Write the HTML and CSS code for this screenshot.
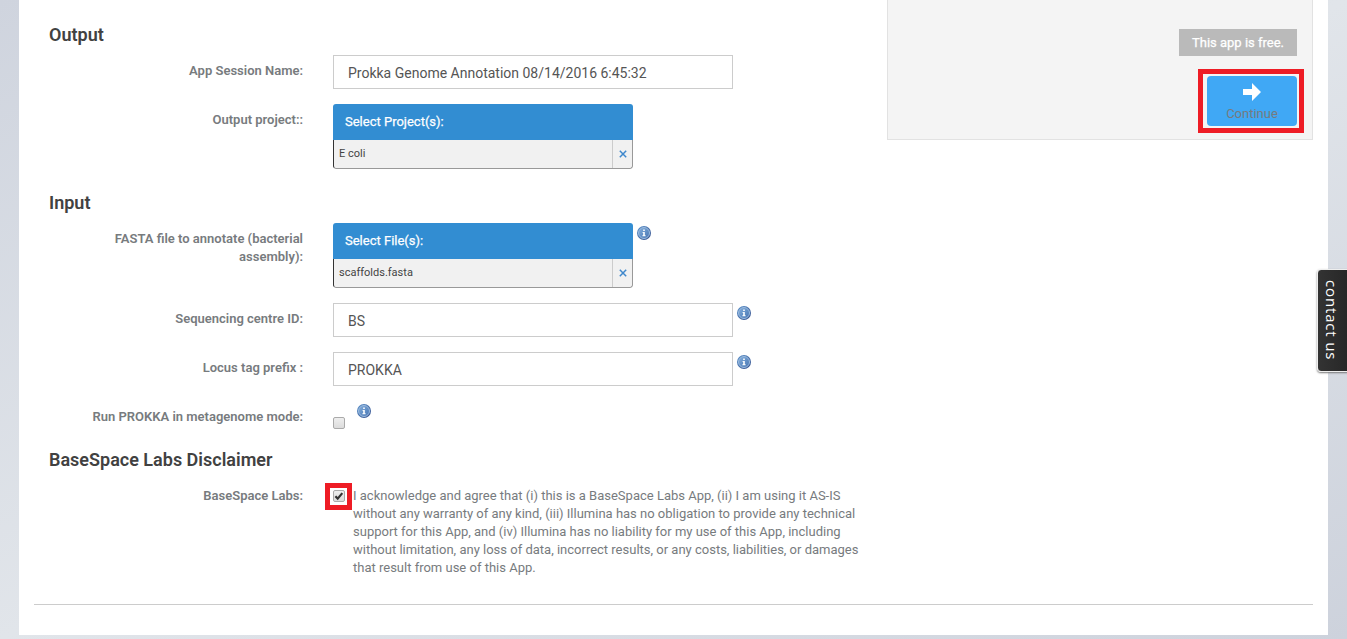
FILE: index.html
```html
<!DOCTYPE html>
<html lang="en">
<head>
<meta charset="utf-8">
<title>Prokka Genome Annotation</title>
<link rel="stylesheet" href="styles.css">
</head>
<body>
<svg class="defs" width="0" height="0" aria-hidden="true">
  <defs>
    <linearGradient id="rim" x1="0" y1="0" x2="1" y2="1"><stop offset="0" stop-color="#5d93cb"/><stop offset="1" stop-color="#344f8c"/></linearGradient>
    <linearGradient id="disc" x1="0" y1="0" x2="1" y2="1"><stop offset="0" stop-color="#84afdc"/><stop offset="1" stop-color="#4775b3"/></linearGradient>
    <symbol id="info" viewBox="0 0 14 14">
      <circle cx="7" cy="7" r="7" fill="url(#rim)"/>
      <circle cx="7" cy="7" r="5.5" fill="url(#disc)" stroke="#a3c1e2" stroke-width=".9"/>
      <path d="M6.2 3.6h1.6v1.3H6.2zM5.5 5.9h2.3v3.3h.8v1H5.4v-1h.8V6.8h-.7z" fill="#fff"/>
    </symbol>
  </defs>
</svg>
<div class="panel">
  <main class="columns">
    <form class="form">
      <h2 class="title">Output</h2>
      <div class="row">
        <label class="label">App Session Name:</label>
        <div class="input"><span>Prokka Genome Annotation 08/14/2016 6:45:32</span></div>
      </div>
      <div class="row">
        <label class="label">Output project::</label>
        <div class="picker">
          <div class="picker-head">Select Project(s):</div>
          <div class="picker-item"><span class="picker-name">E coli</span><span class="remove"><svg width="8" height="8" viewBox="0 0 8 8"><path d="M.8.8l6.4 6.4M7.2.8L.8 7.2"/></svg></span></div>
        </div>
      </div>
      <h2 class="title">Input</h2>
      <div class="row">
        <label class="label">FASTA file to annotate (bacterial assembly):</label>
        <div class="picker">
          <div class="picker-head">Select File(s):</div>
          <div class="picker-item"><span class="picker-name">scaffolds.fasta</span><span class="remove"><svg width="8" height="8" viewBox="0 0 8 8"><path d="M.8.8l6.4 6.4M7.2.8L.8 7.2"/></svg></span></div>
        </div>
        <svg class="info"><use href="#info"/></svg>
      </div>
      <div class="row">
        <label class="label">Sequencing centre ID:</label>
        <div class="input"><span>BS</span></div>
        <svg class="info"><use href="#info"/></svg>
      </div>
      <div class="row">
        <label class="label">Locus tag prefix :</label>
        <div class="input"><span>PROKKA</span></div>
        <svg class="info"><use href="#info"/></svg>
      </div>
      <div class="row row-check">
        <label class="label">Run PROKKA in metagenome mode:</label>
        <span class="check check-low"></span>
        <svg class="info info-far"><use href="#info"/></svg>
      </div>
      <h2 class="title title-last">BaseSpace Labs Disclaimer</h2>
      <div class="row">
        <label class="label">BaseSpace Labs:</label>
        <span class="check-frame"><span class="check"><svg width="12" height="12" viewBox="0 0 12 12"><path d="M2.4 6.3l2.3 2.3 4.6-5.5"/></svg></span></span>
        <p class="terms">I acknowledge and agree that (i) this is a BaseSpace Labs App, (ii) I am using it AS-IS<br>without any warranty of any kind, (iii) Illumina has no obligation to provide any technical<br>support for this App, and (iv) Illumina has no liability for my use of this App, including<br>without limitation, any loss of data, incorrect results, or any costs, liabilities, or damages<br>that result from use of this App.</p>
      </div>
    </form>
    <aside class="summary">
      <span class="price">This app is free.</span>
      <div class="highlight">
        <div class="continue">
          <svg width="18" height="18" viewBox="0 0 18 18"><path d="M0 6h9V0l9 9-9 9v-6H0z" fill="#fff"/></svg>
          <span>Continue</span>
        </div>
      </div>
    </aside>
  </main>
  <hr class="rule">
</div>
<div class="contact"><span>contact us</span></div>
</body>
</html>
```
FILE: styles.css
```css
* { box-sizing: border-box; }
body {
  margin: 0;
  height: 639px;
  overflow: hidden;
  font: 13px/18px Roboto, "Liberation Sans", sans-serif;
  color: #777b7e;
  background: linear-gradient(to bottom right, #cfd4de, #e1e5ea 50%, #cdd2dc);
}
.defs { display: block; height: 0; }
.panel {
  height: 635px;
  margin: 0 19px;
  padding: 0 15px;
  background: #fff;
}
.columns {
  display: flex;
  justify-content: space-between;
  align-items: flex-start;
  height: 604px;
}
.form { width: 840px; padding: 17px 0 0 15px; }
.title {
  height: 38px;
  margin: 0;
  font-size: 18px;
  line-height: 36px;
  font-weight: 600;
  color: #414141;
}
.row { display: flex; align-items: flex-start; margin-bottom: 15px; }
.row + .title { margin-top: 16px; }
.row-check { height: 26px; }
.row-check + .title-last { margin-top: 15px; }
.label {
  width: 254px;
  margin-right: 30px;
  padding: 7px 0 0 30px;
  flex: none;
  text-align: right;
  font-weight: 600;
}
.input {
  width: 400px;
  height: 34px;
  padding: 1px 14px 0;
  border: 1px solid #ccc;
  font-size: 14px;
  line-height: 33px;
  color: #555;
}
.picker { width: 300px; height: 65px; border-radius: 3px; overflow: hidden; }
.picker-head {
  height: 36px;
  padding-left: 12px;
  background: #328dd2;
  color: #fff;
  -webkit-text-stroke: .25px #fff;
  line-height: 35px;
}
.picker-item {
  display: flex;
  height: 29px;
  border: 1px solid #999;
  border-top: 0;
  border-left-color: #333;
  border-radius: 0 0 3px 3px;
  background: #f1f1f1;
  color: #444;
  font-size: 11px;
  line-height: 27px;
}
.picker-name { flex: 1; padding-left: 5px; }
.remove {
  display: flex;
  width: 20px;
  padding-bottom: 1px;
  align-items: center;
  justify-content: center;
  border-left: 1px solid #ccc;
}
.remove path { fill: none; stroke: #3f88cc; stroke-width: 1.5; }
.info { width: 14px; height: 14px; margin: 3px 0 0 4px; }
.info-far { margin-left: 11px; }
.check {
  display: block;
  width: 12px;
  height: 12px;
  flex: none;
  border: 1px solid #aaa;
  border-radius: 2px;
  background: linear-gradient(#eee, #dcdcdc);
}
.check-low { margin: 16px 1px 0 0; }
.check svg { display: block; margin: -1px; }
.check path { fill: none; stroke: #333; stroke-width: 2.2; }
.check-frame {
  width: 27px;
  height: 27px;
  flex: none;
  margin: 3px 1px 0 -8px;
  padding: 2px 2px 3px 3px;
  border: 5px solid #ee1c25;
}
.terms { margin: 7px 0 0; white-space: nowrap; }
.summary {
  display: flex;
  flex-direction: column;
  align-items: flex-end;
  width: 426px;
  height: 140px;
  padding: 29px 8px 0 0;
  border: 1px solid #e2e2e2;
  border-top: 0;
  background: #f4f4f4;
}
.price {
  width: 118px;
  height: 27px;
  margin-right: 7px;
  background: #bababa;
  color: #fff;
  -webkit-text-stroke: .25px #fff;
  line-height: 27px;
  text-align: center;
}
.highlight {
  width: 106px;
  height: 64px;
  margin-top: 13px;
  padding: 2px 2px 2px 4px;
  border: 5px solid #ee1c25;
}
.continue {
  display: flex;
  flex-direction: column;
  align-items: center;
  width: 90px;
  height: 50px;
  padding-top: 7px;
  border-radius: 4px;
  background: #40a8f5;
  color: #777b7e;
}
.continue span { margin-top: 4px; }
.rule { margin: 0; border: 0; border-top: 1px solid #ccc; }
.contact {
  position: absolute;
  top: 269px;
  right: -4px;
  width: 34px;
  height: 103px;
  padding-right: 4px;
  border: 1px solid #eee;
  border-radius: 4px;
  background: linear-gradient(90deg, #333, #262626);
  box-shadow: 0 1px 2px #777;
  color: #fff;
  font: 15px/28px "Open Sans", sans-serif;
  letter-spacing: .85px;
  writing-mode: vertical-rl;
  text-align: center;
}
```
